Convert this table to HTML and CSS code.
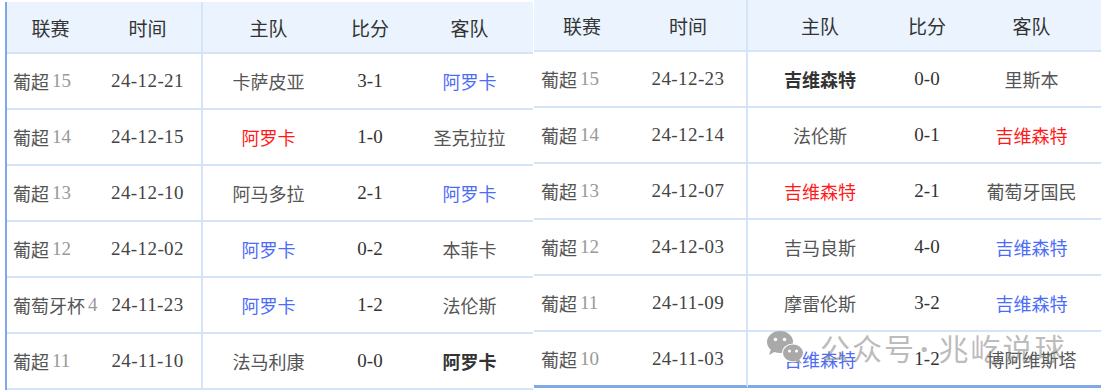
FILE: index.html
```html
<!DOCTYPE html>
<html lang="zh-CN">
<head>
<meta charset="utf-8">
<title>赛程</title>
<link rel="stylesheet" href="styles.css">
</head>
<body>
<div class="page">
  <div class="tbl tbl-left">
    <div class="c h">联赛</div><div class="c h sep">时间</div><div class="c h">主队</div><div class="c h">比分</div><div class="c h">客队</div>

    <div class="c lg">葡超<span class="n">15</span></div><div class="c d sep">24-12-21</div><div class="c t">卡萨皮亚</div><div class="c s">3-1</div><div class="c t blue">阿罗卡</div>
    <div class="c lg">葡超<span class="n">14</span></div><div class="c d sep">24-12-15</div><div class="c t red">阿罗卡</div><div class="c s">1-0</div><div class="c t">圣克拉拉</div>
    <div class="c lg">葡超<span class="n">13</span></div><div class="c d sep">24-12-10</div><div class="c t">阿马多拉</div><div class="c s">2-1</div><div class="c t blue">阿罗卡</div>
    <div class="c lg">葡超<span class="n">12</span></div><div class="c d sep">24-12-02</div><div class="c t blue">阿罗卡</div><div class="c s">0-2</div><div class="c t">本菲卡</div>
    <div class="c lg">葡萄牙杯<span class="n">4</span></div><div class="c d sep">24-11-23</div><div class="c t blue">阿罗卡</div><div class="c s">1-2</div><div class="c t">法伦斯</div>
    <div class="c lg">葡超<span class="n">11</span></div><div class="c d sep">24-11-10</div><div class="c t">法马利康</div><div class="c s">0-0</div><div class="c t bold">阿罗卡</div>
  </div>

  <div class="tbl tbl-right">
    <div class="c h">联赛</div><div class="c h sep">时间</div><div class="c h">主队</div><div class="c h">比分</div><div class="c h">客队</div>

    <div class="c lg">葡超<span class="n">15</span></div><div class="c d sep">24-12-23</div><div class="c t bold">吉维森特</div><div class="c s">0-0</div><div class="c t">里斯本</div>
    <div class="c lg">葡超<span class="n">14</span></div><div class="c d sep">24-12-14</div><div class="c t">法伦斯</div><div class="c s">0-1</div><div class="c t red">吉维森特</div>
    <div class="c lg">葡超<span class="n">13</span></div><div class="c d sep">24-12-07</div><div class="c t red">吉维森特</div><div class="c s">2-1</div><div class="c t">葡萄牙国民</div>
    <div class="c lg">葡超<span class="n">12</span></div><div class="c d sep">24-12-03</div><div class="c t">吉马良斯</div><div class="c s">4-0</div><div class="c t blue">吉维森特</div>
    <div class="c lg">葡超<span class="n">11</span></div><div class="c d sep">24-11-09</div><div class="c t">摩雷伦斯</div><div class="c s">3-2</div><div class="c t blue">吉维森特</div>
    <div class="c lg last">葡超<span class="n">10</span></div><div class="c d sep last">24-11-03</div><div class="c t blue last">吉维森特</div><div class="c s last">1-2</div><div class="c t last">博阿维斯塔</div>
  </div>

  <div class="watermark">
    <svg class="wx" width="40" height="36" viewBox="0 0 40 36" aria-hidden="true">
      <ellipse cx="14" cy="12" rx="13" ry="11" fill="#a9a9a9"/>
      <path d="M5 19 L3 25 L10 21 Z" fill="#a9a9a9"/>
      <circle cx="9.5" cy="9.5" r="1.8" fill="#fff"/>
      <circle cx="18.5" cy="9.5" r="1.8" fill="#fff"/>
      <ellipse cx="27" cy="23" rx="11" ry="9.5" fill="#fff"/>
      <ellipse cx="27" cy="23" rx="10" ry="8.5" fill="#a9a9a9"/>
      <path d="M33 29 L36 34 L29 31 Z" fill="#a9a9a9"/>
      <circle cx="23.5" cy="21" r="1.5" fill="#fff"/>
      <circle cx="30.5" cy="21" r="1.5" fill="#fff"/>
    </svg>
    <span class="wm-text">公众号<span class="wm-dot">·</span>兆屹说球</span>
  </div>
</div>
</body>
</html>
```

FILE: styles.css
```css
html, body {
  margin: 0;
  padding: 0;
  background: #ffffff;
}

.page {
  position: relative;
  width: 1103px;
  height: 391px;
  display: flex;
  align-items: flex-start;
  font-family: "Liberation Serif", "Noto Sans CJK SC", serif;
  font-size: 18px;
  color: #555;
  overflow: hidden;
}

.tbl {
  display: grid;
  grid-template-rows: 52px repeat(6, 56px);
}

.tbl-left {
  margin-left: 5px;
  margin-top: 2px;
  border-left: 2px solid #7ea9e6;
  grid-template-columns: 87px 109px 131px 72px 127px;
}

.tbl-right {
  margin-left: 1px;
  margin-top: 0;
  grid-template-columns: 96px 118px 144px 70px 139px;
}

.c {
  display: flex;
  align-items: center;
  justify-content: center;
  border-bottom: 2px solid #d5e4f6;
  box-sizing: border-box;
  white-space: nowrap;
}

.c.sep {
  border-right: 2px solid #d5e4f6;
}

.c.h {
  background: #ebf4fe;
  color: #333;
  font-size: 19px;
}

.c.lg {
  justify-content: flex-start;
  padding-left: 6px;
  color: #555;
}

.tbl-right .c.lg {
  padding-left: 7px;
}

.n {
  color: #999;
  margin-left: 3px;
  font-size: 19px;
}

.c.d {
  color: #444;
  font-size: 19px;
  letter-spacing: 0.4px;
}

.c.s {
  color: #333;
  font-size: 19px;
}

.c.t {
  color: #555;
}

.c.red {
  color: #ff1a1a;
}

.c.blue {
  color: #4c6cf8;
}

.c.bold {
  color: #333;
  font-weight: bold;
}

.c.last {
  border-bottom: 3px solid #7ea9e6;
}

.watermark {
  position: absolute;
  left: 766px;
  top: 329px;
  display: flex;
  align-items: center;
  gap: 14px;
  pointer-events: none;
}

.wx {
  display: block;
}

.wm-text {
  font-family: "Noto Sans CJK SC", "Noto Sans", sans-serif;
  font-size: 30px;
  line-height: 36px;
  letter-spacing: 2px;
  color: rgba(130, 130, 130, 0.55);
}

.wm-dot {
  display: inline-block;
  font-family: "Noto Sans", sans-serif;
  font-weight: bold;
  margin: 0 8px 0 4px;
}
```
